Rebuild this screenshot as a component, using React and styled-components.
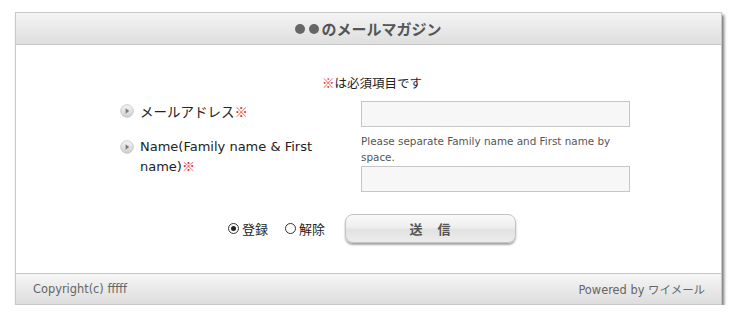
import React from 'react';
import styled, { createGlobalStyle } from 'styled-components';

const GlobalStyle = createGlobalStyle`
  html, body {
    margin: 0;
    padding: 0;
    background: #fff;
  }
  body {
    font-family: 'DejaVu Sans', 'Noto Sans CJK JP', sans-serif;
    color: #222;
  }
`;

const Frame = styled.div`
  margin: 12px 0 0 15px;
  width: 705px;
  border: 1px solid #c8c8c8;
  background: #fff;
  box-shadow: 2px 3px 3px rgba(0, 0, 0, 0.55);
`;

const Header = styled.div`
  height: 31px;
  border-bottom: 1px solid #c4c4c4;
  background: linear-gradient(#f4f4f4, #dedede);
  display: flex;
  align-items: center;
  justify-content: center;
  font-family: 'Noto Sans CJK JP', sans-serif;
  font-size: 15px;
  font-weight: bold;
  color: #555;
`;

const Dot = styled.span`
  width: 10px;
  height: 10px;
  border-radius: 50%;
  background: #666;
  margin-right: ${(p) => (p.$last ? 2 : 4)}px;
`;

const Body = styled.div`
  padding: 30px 0 30px 104px;
`;

const Note = styled.div`
  margin-left: 202px;
  font-family: 'Noto Sans CJK JP', sans-serif;
  font-size: 12.5px;
  line-height: 16px;
  color: #222;
`;

const Mark = styled.span`
  color: #e53333;
  font-family: 'Noto Sans CJK JP', sans-serif;
  line-height: 1;
`;

const Row = styled.div`
  display: grid;
  grid-template-columns: 241px 269px;
  margin-top: ${(p) => p.$top}px;
`;

const Label = styled.div`
  display: flex;
  align-items: flex-start;
  gap: 6px;
  font-size: 13px;
  line-height: 20px;
  color: #222;
  padding-right: 40px;
`;

const LabelText = styled.span`
  font-family: ${(p) => (p.$jp ? "'Noto Sans CJK JP', sans-serif" : "'DejaVu Sans', sans-serif")};
  font-size: ${(p) => (p.$jp ? '13.5px' : '13px')};
`;

const Bullet = styled.svg`
  flex: none;
  width: 14px;
  height: 14px;
  margin-top: 3px;
`;

const Field = styled.div`
  display: flex;
  flex-direction: column;
`;

const Hint = styled.div`
  font-size: 10.4px;
  line-height: 16px;
  color: #555;
  margin: -4px 0 1px;
`;

const Input = styled.div`
  height: 24px;
  border: 1px solid #c6c6c6;
  background: #f7f7f7;
`;

const Actions = styled.div`
  display: flex;
  align-items: center;
  margin: 22px 0 0 108px;
`;

const Choice = styled.label`
  display: flex;
  align-items: center;
  gap: 3px;
  margin-right: 17px;
  font-family: 'Noto Sans CJK JP', sans-serif;
  font-size: 13px;
  color: #222;
`;

const Radio = styled.span`
  width: 9px;
  height: 9px;
  border: 1px solid #333;
  border-radius: 50%;
  display: flex;
  align-items: center;
  justify-content: center;
  &::after {
    content: '';
    width: 5px;
    height: 5px;
    border-radius: 50%;
    background: ${(p) => (p.$on ? '#222' : 'transparent')};
  }
`;

const Submit = styled.button`
  margin-left: 3px;
  width: 171px;
  height: 29px;
  border: 1px solid #c4c4c4;
  border-radius: 8px;
  background: linear-gradient(#f9f9f9 0%, #eeeeee 45%, #e2e2e2 55%, #ececec 100%);
  box-shadow: 0 2px 2px rgba(0, 0, 0, 0.35);
  font-family: 'Noto Sans CJK JP', sans-serif;
  font-size: 13px;
  font-weight: bold;
  color: #555;
  letter-spacing: 1px;
`;

const Footer = styled.div`
  height: 30px;
  border-top: 1px solid #c8c8c8;
  background: linear-gradient(#f6f6f6, #dddddd);
  display: flex;
  align-items: center;
  justify-content: space-between;
  padding: 0 16px 0 17px;
  font-size: 11.4px;
  color: #666;
`;

const Powered = styled.span`
  font-family: 'DejaVu Sans', 'Noto Sans CJK JP', sans-serif;
`;

function Arrow() {
  return (
    <Bullet viewBox="0 0 14 14">
      <defs>
        <linearGradient id="bg" x1="0" y1="0" x2="0" y2="1">
          <stop offset="0" stopColor="#f4f4f4" />
          <stop offset="1" stopColor="#cfcfcf" />
        </linearGradient>
      </defs>
      <circle cx="7" cy="7" r="6.3" fill="url(#bg)" stroke="#c2c2c2" strokeWidth="0.8" />
      <path d="M5.6 4.3 L9.2 7 L5.6 9.7 Z" fill="#7a7a7a" />
    </Bullet>
  );
}

export default function App() {
  return (
    <>
      <GlobalStyle />
      <Frame>
        <Header>
          <Dot />
          <Dot $last />
          のメールマガジン
        </Header>
        <Body>
          <Note>
            <Mark>※</Mark>は必須項目です
          </Note>
          <Row $top={10}>
            <Label>
              <Arrow />
              <LabelText $jp>
                メールアドレス<Mark>※</Mark>
              </LabelText>
            </Label>
            <Field>
              <Input />
            </Field>
          </Row>
          <Row $top={10}>
            <Label>
              <Arrow />
              <LabelText>
                Name(Family name &amp; First name)<Mark>※</Mark>
              </LabelText>
            </Label>
            <Field>
              <Hint>Please separate Family name and First name by space.</Hint>
              <Input />
            </Field>
          </Row>
          <Actions>
            <Choice>
              <Radio $on />
              登録
            </Choice>
            <Choice>
              <Radio />
              解除
            </Choice>
            <Submit>送　信</Submit>
          </Actions>
        </Body>
        <Footer>
          <span>Copyright(c) fffff</span>
          <Powered>Powered by ワイメール</Powered>
        </Footer>
      </Frame>
    </>
  );
}
